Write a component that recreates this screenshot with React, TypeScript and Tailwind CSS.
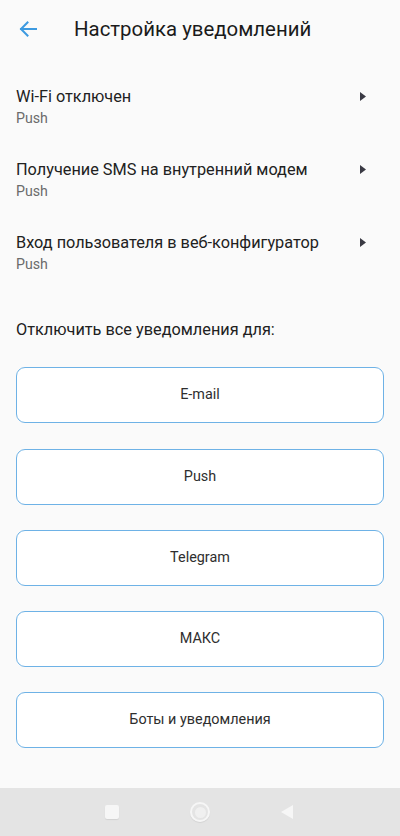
import type {ReactNode} from 'react';

const font = {fontFamily: 'Roboto, "Noto Sans", sans-serif'};

interface Rule {
  title: string;
  channel: string;
}

const rules: Rule[] = [
  {title: 'Wi-Fi отключен', channel: 'Push'},
  {title: 'Получение SMS на внутренний модем', channel: 'Push'},
  {title: 'Вход пользователя в веб-конфигуратор', channel: 'Push'},
];

const channels = ['E-mail', 'Push', 'Telegram', 'МАКС', 'Боты и уведомления'];

function RuleRow({rule, first}: {rule: Rule; first?: boolean}) {
  return (
    <div className={(first ? 'mt-[27px]' : 'mt-[31px]') + ' flex items-start pl-4 pr-[34px]'}>
      <div className="flex-1">
        <div className="text-[16.3px] leading-6 text-[#212121]">{rule.title}</div>
        <div className="text-[14.2px] leading-[18px] text-[#6b6b6b]">{rule.channel}</div>
      </div>
      <svg width="6" height="9" viewBox="0 0 6 9" className="mt-[7px]">
        <path d="M0 0 L6 4.5 L0 9 Z" fill="#3a3a44"/>
      </svg>
    </div>
  );
}

function ChannelButton({children, className}: {children: ReactNode; className: string}) {
  return (
    <button
      className={
        'mx-4 flex h-[56px] items-center justify-center rounded-[9px] border border-[#6eb2e6] bg-white text-[14.4px] text-[#2e2e2e] ' +
        className
      }
    >
      {children}
    </button>
  );
}

export default function App() {
  return (
    <div className="flex h-[836px] w-[400px] flex-col bg-[#fafafa]" style={font}>
      <div className="flex-1">
        <div className="flex h-[58px] items-center">
          <svg width="18" height="16" viewBox="0 0 18 16" className="ml-[19px]">
            <path d="M17 8 H2 M8.5 1.5 L2 8 L8.5 14.5" fill="none" stroke="#3d9ae0" strokeWidth="2" strokeLinecap="square"/>
          </svg>
          <div className="ml-[37px] text-[20.4px] text-[#1a1a1a]">Настройка уведомлений</div>
        </div>

        {rules.map((r, i) => (
          <RuleRow key={r.title} rule={r} first={i === 0}/>
        ))}

        <div className="mt-[45px] pl-4 text-[16.3px] leading-6 text-[#212121]">Отключить все уведомления для:</div>

        <div className="flex flex-col">
          <ChannelButton className="mt-[25px]">{channels[0]}</ChannelButton>
          <ChannelButton className="mt-[26px]">{channels[1]}</ChannelButton>
          <ChannelButton className="mt-[25px]">{channels[2]}</ChannelButton>
          <ChannelButton className="mt-[25px]">{channels[3]}</ChannelButton>
          <ChannelButton className="mt-[25px]">{channels[4]}</ChannelButton>
        </div>
      </div>

      {/* system nav */}
      <div className="flex h-[48px] items-center bg-[#e4e4e4]">
        <div className="ml-[105px] h-[14px] w-[14px] rounded-[2px] bg-[#f6f6f6] shadow-[0_1px_1px_rgba(0,0,0,0.08)]"/>
        <div className="ml-[71px] flex h-[20px] w-[20px] items-center justify-center rounded-full border-2 border-[#f6f6f6] shadow-[0_1px_1px_rgba(0,0,0,0.08)]">
          <div className="h-[11px] w-[11px] rounded-full bg-[#f0f0f0]"/>
        </div>
        <svg width="14" height="16" viewBox="0 0 14 16" className="ml-[70px]">
          <path d="M13 1 L1 8 L13 15 Z" fill="#f6f6f6"/>
        </svg>
      </div>
    </div>
  );
}
